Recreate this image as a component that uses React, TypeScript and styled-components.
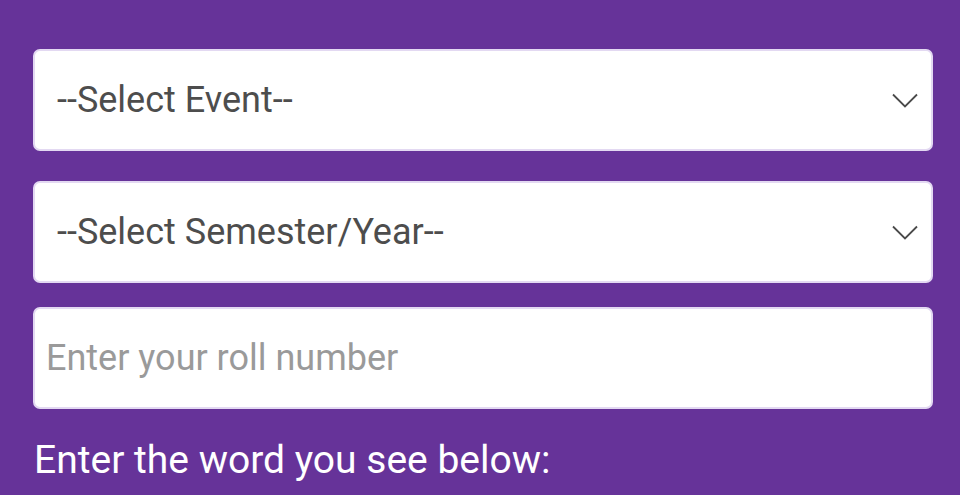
import styled, { createGlobalStyle } from 'styled-components';

const GlobalStyle = createGlobalStyle`
  html, body {
    margin: 0;
    padding: 0;
    background-color: #663399;
    font-family: Roboto, "Liberation Sans", sans-serif;
  }
`;

const Page = styled.div`
  width: 960px;
  height: 495px;
  overflow: hidden;
  background-color: #663399;
  padding: 49px 27px 0 33px;
  box-sizing: border-box;
  display: flex;
  flex-direction: column;
`;

const Field = styled.div<{ $gap: number }>`
  position: relative;
  width: 900px;
  height: 102px;
  box-sizing: border-box;
  margin-bottom: ${(p) => p.$gap}px;
  background-color: #ffffff;
  border: 2px solid #e3d9f2;
  border-radius: 7px;
  display: flex;
  align-items: center;
`;

const SelectText = styled.span`
  padding-left: 22px;
  font-size: 36px;
  color: #4d4d4d;
  flex: 1;
`;

const Placeholder = styled.span`
  padding-left: 11px;
  font-size: 36px;
  color: #9a9a9a;
`;

const Chevron = styled.svg`
  width: 26px;
  height: 15px;
  margin-right: 13px;
  margin-top: 1px;
`;

const Label = styled.div`
  margin-top: 28px;
  padding-left: 1px;
  font-size: 39px;
  color: #ffffff;
`;

function Arrow() {
  return (
    <Chevron viewBox="0 0 26 15">
      <path d="M1 1.5 L13 13.5 L25 1.5" fill="none" stroke="#4a4a4a" strokeWidth="1.8" />
    </Chevron>
  );
}

export default function App() {
  return (
    <>
      <GlobalStyle />
      <Page>
        <Field $gap={30}>
          <SelectText>--Select Event--</SelectText>
          <Arrow />
        </Field>
        <Field $gap={24}>
          <SelectText>--Select Semester/Year--</SelectText>
          <Arrow />
        </Field>
        <Field $gap={0}>
          <Placeholder>Enter your roll number</Placeholder>
        </Field>
        <Label>Enter the word you see below:</Label>
      </Page>
    </>
  );
}
